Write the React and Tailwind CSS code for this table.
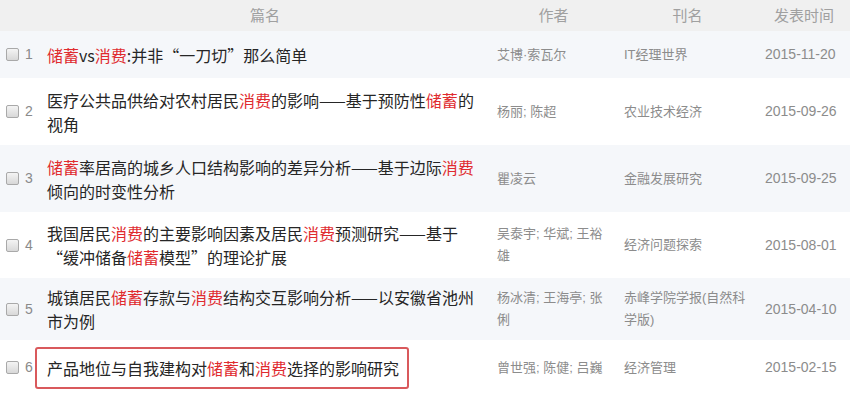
import React from 'react'

const rows = [
  {
    no: 1,
    title: [['储蓄', true], ['vs', false], ['消费', true], [':并非“一刀切”那么简单', false]],
    author: '艾博·索瓦尔',
    journal: 'IT经理世界',
    date: '2015-11-20',
    h: 'h-[47px]',
  },
  {
    no: 2,
    title: [['医疗公共品供给对农村居民', false], ['消费', true], ['的影响——基于预防性', false], ['储蓄', true], ['的视角', false]],
    author: '杨丽; 陈超',
    journal: '农业技术经济',
    date: '2015-09-26',
    h: 'h-[67px]',
  },
  {
    no: 3,
    title: [['储蓄', true], ['率居高的城乡人口结构影响的差异分析——基于边际', false], ['消费', true], ['倾向的时变性分析', false]],
    author: '瞿凌云',
    journal: '金融发展研究',
    date: '2015-09-25',
    h: 'h-[67px]',
  },
  {
    no: 4,
    title: [['我国居民', false], ['消费', true], ['的主要影响因素及居民', false], ['消费', true], ['预测研究——基于', false], ['wbr'], ['“缓冲储备', false], ['储蓄', true], ['模型”的理论扩展', false]],
    author: '吴泰宇; 华斌; 王裕雄',
    journal: '经济问题探索',
    date: '2015-08-01',
    h: 'h-[66px]',
  },
  {
    no: 5,
    title: [['城镇居民', false], ['储蓄', true], ['存款与', false], ['消费', true], ['结构交互影响分析——以安徽省池州市为例', false]],
    author: '杨冰清; 王海亭; 张俐',
    journal: '赤峰学院学报(自然科学版)',
    date: '2015-04-10',
    h: 'h-[62px]',
  },
  {
    no: 6,
    title: [['产品地位与自我建构对', false], ['储蓄', true], ['和', false], ['消费', true], ['选择的影响研究', false]],
    author: '曾世强; 陈健; 吕巍',
    journal: '经济管理',
    date: '2015-02-15',
    h: 'h-[55px]',
    marked: true,
  },
]

const latin = "font-['Liberation_Sans','Noto_Sans_CJK_SC',sans-serif]"
const han = "font-['Noto_Sans_CJK_SC',sans-serif]"

// 'wbr' entries mark where the line may break before an opening quote
const Title = ({ parts }) => (
  <>
    {parts.map(([text, hit], i) =>
      text === 'wbr' ? (
        <wbr key={i} />
      ) : (
        <span key={i} className={hit ? 'text-[#e02b2f]' : ''}>{text}</span>
      )
    )}
  </>
)

export default function App() {
  return (
    <div className={`w-[850px] h-[400px] overflow-hidden bg-white ${latin}`}>
      <div className={`flex h-[31px] items-center bg-[#f0f0f0] text-[15px] text-[#a0a0a0] ${han}`}>
        <div className="w-[40px]" />
        <div className="w-[450px] text-center">篇名</div>
        <div className="w-[127px] text-center">作者</div>
        <div className="w-[141px] text-center">刊名</div>
        <div className="w-[92px] text-center">发表时间</div>
      </div>

      {rows.map((row, i) => (
        <div
          key={row.no}
          className={`flex items-center ${row.h} ${i % 2 === 0 ? 'bg-[#f5f7fa]' : 'bg-white'}`}
        >
          <div className="flex w-[40px] items-center pl-[6px]">
            <span className="h-[13px] w-[13px] rounded-[2px] border border-[#a9a9a9] bg-gradient-to-b from-[#f4f4f4] to-[#d8d8d8]" />
            <span className="ml-[6px] text-[14px] text-[#8a8a8a]">{row.no}</span>
          </div>
          <div className={`w-[450px] pl-[7px] pr-[3px] text-[16px] leading-[24px] text-[#262626] ${han}`}>
            {row.marked ? (
              <div className="-ml-[12px] inline-block rounded-[3px] border-2 border-[#d9595c] py-[7px] pl-[10px] pr-[8px]">
                <Title parts={row.title} />
              </div>
            ) : (
              <Title parts={row.title} />
            )}
          </div>
          <div className="w-[127px] pl-[7px] pr-[8px] text-[13px] leading-[22px] text-[#8c8c8c]">
            {row.author}
          </div>
          <div className="w-[141px] pl-[7px] pr-[6px] text-[13px] leading-[22px] text-[#8c8c8c]">
            {row.journal}
          </div>
          <div className="w-[92px] pl-[7px] text-[14px] text-[#8c8c8c]">{row.date}</div>
        </div>
      ))}
    </div>
  )
}
